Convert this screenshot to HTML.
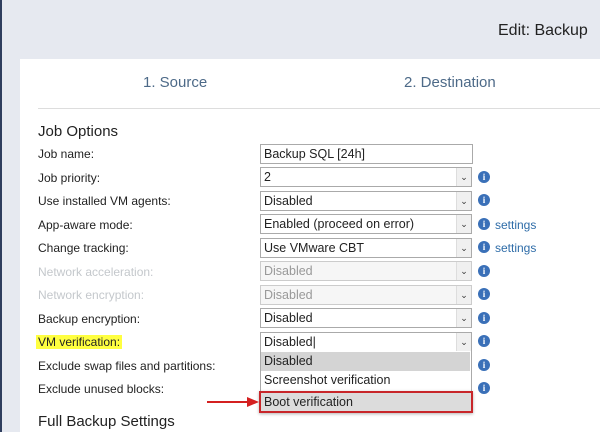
<!DOCTYPE html>
<html><head><style>
body{margin:0;width:600px;height:432px;overflow:hidden;background:#e6e9f0;font-family:"Liberation Sans",sans-serif;position:relative}
.lb{position:absolute;left:0;top:0;width:2px;height:432px;background:#2f3e5e}
.title{position:absolute;left:498px;top:22px;font-size:16px;color:#222}
.panel{position:absolute;left:20px;top:59px;width:580px;height:373px;background:#fff}
.tab{position:absolute;top:74px;font-size:15px;color:#4d6a88}
.hr{position:absolute;left:38px;right:0;top:108px;border-top:1px solid #ddd}
.h{position:absolute;left:38px;font-size:15px;color:#222}
.l{position:absolute;left:38px;font-size:12px;color:#222}
.g{color:#c4c8cc}
.s{position:absolute;left:260px;width:207px;height:18px;border:1px solid #aaa;font-size:12.5px;line-height:18px;padding-left:3px;box-sizing:content-box;color:#222;background:#fff}
.s.d{color:#999;background:#f6f6f6;border-color:#ccc}
.ar{position:absolute;right:0;top:0;width:14px;height:18px;background:#f0f0f0;border-left:1px solid #ddd;font-size:9px;text-align:center;line-height:18px;color:#333}
.i{position:absolute;left:478px;width:12px;height:12px;border-radius:50%;background:#3a70b8;color:#fff;font:bold 9px/12px "Liberation Serif",serif;text-align:center}
.st{position:absolute;left:495px;font-size:12px;color:#2e6ca8}
.o{position:absolute;left:261px;width:206px;height:19px;font-size:12.5px;line-height:19px;padding-left:3px;color:#222}
</style></head><body>
<div class="lb"></div>
<div class="title">Edit: Backup</div>
<div class="panel"></div>
<div class="tab" style="left:143px">1. Source</div>
<div class="tab" style="left:404px">2. Destination</div>
<div class="hr"></div>
<div class="h" style="top:123px">Job Options</div>

<div class="l" style="top:147px">Job name:</div>
<div class="s" style="top:144px;width:208px">Backup SQL [24h]</div>

<div class="l" style="top:171px">Job priority:</div>
<div class="s" style="top:167px">2<div class="ar">&#8964;</div></div><div class="i" style="top:171px">i</div>

<div class="l" style="top:194px">Use installed VM agents:</div>
<div class="s" style="top:191px">Disabled<div class="ar">&#8964;</div></div><div class="i" style="top:194px">i</div>

<div class="l" style="top:218px">App-aware mode:</div>
<div class="s" style="top:214px">Enabled (proceed on error)<div class="ar">&#8964;</div></div><div class="i" style="top:218px">i</div><div class="st" style="top:218px">settings</div>

<div class="l" style="top:241px">Change tracking:</div>
<div class="s" style="top:238px">Use VMware CBT<div class="ar">&#8964;</div></div><div class="i" style="top:241px">i</div><div class="st" style="top:241px">settings</div>

<div class="l g" style="top:265px">Network acceleration:</div>
<div class="s d" style="top:261px">Disabled<div class="ar">&#8964;</div></div><div class="i" style="top:265px">i</div>

<div class="l g" style="top:288px">Network encryption:</div>
<div class="s d" style="top:285px">Disabled<div class="ar">&#8964;</div></div><div class="i" style="top:288px">i</div>

<div class="l" style="top:312px">Backup encryption:</div>
<div class="s" style="top:308px">Disabled<div class="ar">&#8964;</div></div><div class="i" style="top:312px">i</div>

<div class="l" style="top:335px;background:#ffff40;left:36px;padding:0 2px">VM verification:</div>
<div class="s" style="top:332px">Disabled|<div class="ar">&#8964;</div></div><div class="i" style="top:335px">i</div>

<div class="l" style="top:359px">Exclude swap files and partitions:</div>
<div class="i" style="top:359px">i</div>
<div class="l" style="top:382px">Exclude unused blocks:</div>
<div class="i" style="top:382px">i</div>

<div style="position:absolute;left:260px;top:351px;width:210px;height:61px;border:1px solid #aaa;border-top:none;background:#fff"></div>
<div class="o" style="top:352px;background:#d4d4d4">Disabled</div>
<div class="o" style="top:371px">Screenshot verification</div>
<div class="o" style="top:391px;background:#dcdcdc;border:2px solid #c8262a;left:259px;width:207px;height:18px;line-height:18px;box-shadow:0 1px 3px rgba(0,0,0,.3)">Boot verification</div>

<svg style="position:absolute;left:205px;top:396px" width="55" height="12"><line x1="2" y1="6" x2="44" y2="6" stroke="#d42020" stroke-width="2"/><polygon points="42,1 54,6 42,11" fill="#d42020"/></svg>

<div class="h" style="top:413px">Full Backup Settings</div>
</body></html>
